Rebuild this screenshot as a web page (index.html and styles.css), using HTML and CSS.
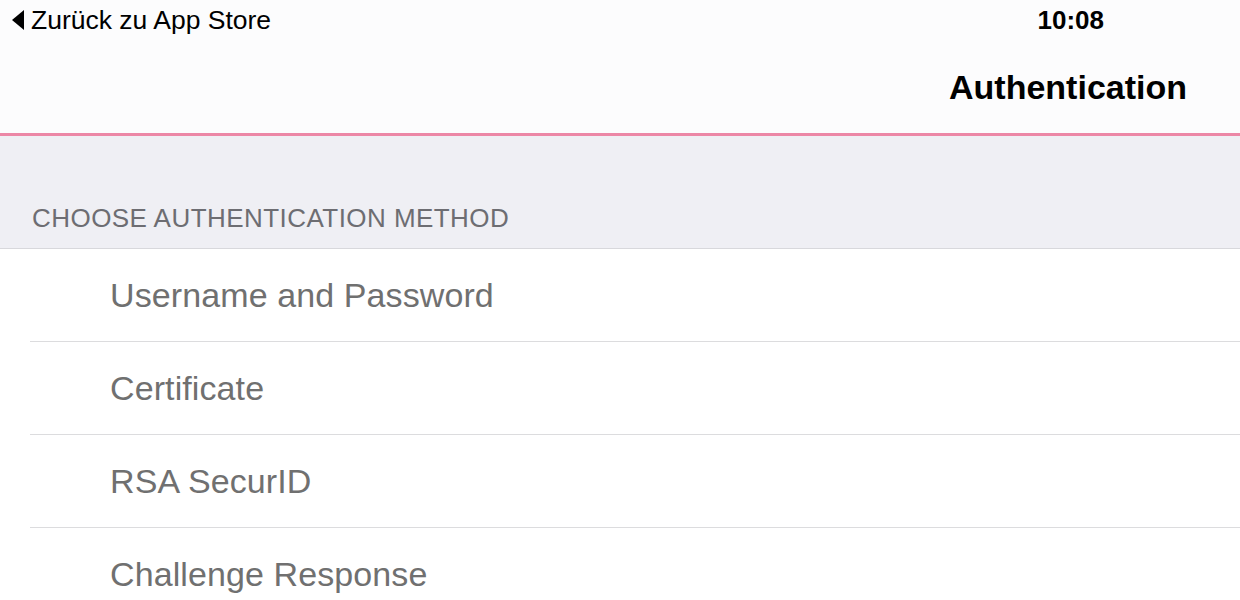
FILE: index.html
```html
<!DOCTYPE html>
<html>
<head>
<meta charset="utf-8">
<title>Authentication</title>
<link rel="stylesheet" href="styles.css">
</head>
<body>
<div class="topbar">
<div class="status">
<a href="#" class="back">
<svg class="back-arrow" width="12" height="20" viewBox="0 0 12 20"><polygon points="12,0 12,20 0,10" fill="#000"/></svg>
<span>Zurück zu App Store</span>
</a>
<span class="time">10:08</span>
</div>
<div class="navbar">
<h1 class="title">Authentication</h1>
</div>
</div>
<div class="section-head">CHOOSE AUTHENTICATION METHOD</div>
<ul class="list">
<li class="row"><span>Username and Password</span></li>
<li class="row"><span>Certificate</span></li>
<li class="row"><span>RSA SecurID</span></li>
<li class="row"><span>Challenge Response</span></li>
</ul>
</body>
</html>
```

FILE: styles.css
```css
html, body{
margin:0;
padding:0;
}
body{
background:#fff;
font-family:"Liberation Sans", Arial, sans-serif;
overflow:hidden;
}
.topbar{
background:#fcfcfd;
border-bottom:3px solid #ec87a6;
height:133px;
}
.status{
height:40px;
display:flex;
align-items:center;
justify-content:space-between;
padding:0 136px 0 12px;
}
.back{
display:flex;
align-items:center;
gap:7px;
color:#000;
text-decoration:none;
font-size:26.5px;
}
.time{
font-size:26px;
font-weight:600;
color:#000;
}
.navbar{
display:flex;
justify-content:flex-end;
padding-right:53px;
}
.title{
margin:0;
font-size:34px;
font-weight:600;
line-height:94px;
color:#000;
}
.section-head{
background:#efeff4;
height:113px;
display:flex;
align-items:flex-end;
padding:0 0 14px 32px;
box-sizing:border-box;
font-size:26px;
letter-spacing:0.45px;
color:#6d6d72;
border-bottom:1px solid #d8d8dc;
}
.list{
list-style:none;
margin:0;
padding:0 0 0 30px;
}
.row{
height:92px;
display:flex;
align-items:center;
padding-left:80px;
font-size:34px;
letter-spacing:0.1px;
color:#707070;
border-bottom:1px solid #dcdcde;
}
```
